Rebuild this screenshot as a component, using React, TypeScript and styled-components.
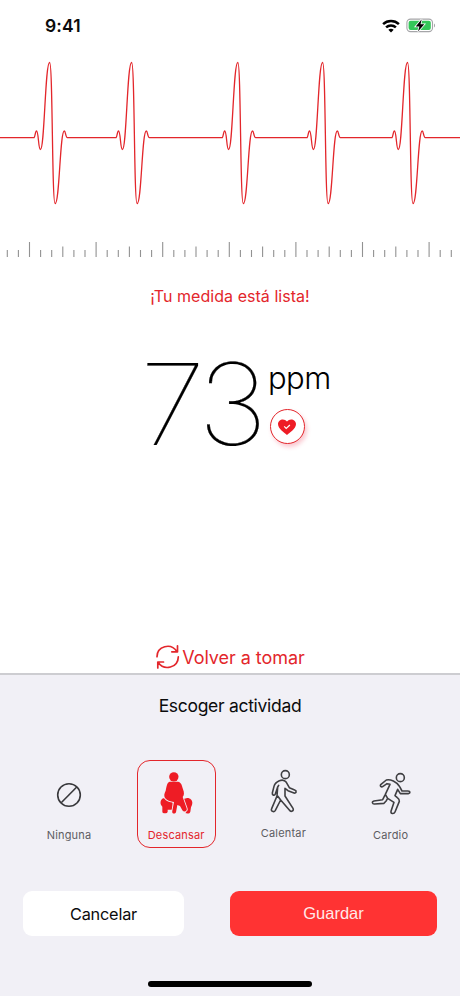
import React from "react";
import styled, { createGlobalStyle } from "styled-components";

const RED = "#e3262b";

const GlobalStyle = createGlobalStyle`
  html, body { margin: 0; padding: 0; background: #fff; }
  * { box-sizing: border-box; }
  svg { display: block; flex: none; }
`;

const Screen = styled.main`
  width: 460px;
  height: 996px;
  display: flex;
  flex-direction: column;
  background: #fff;
  color: #0b0b0c;
  font-family: Inter, "Liberation Sans", sans-serif;
  overflow: hidden;
`;

const StatusBar = styled.header`
  height: 51px;
  flex: none;
  display: flex;
  align-items: center;
  justify-content: space-between;
  padding: 0 24px 0 45px;
`;

const Time = styled.span`
  font-size: 17.5px;
  font-weight: 600;
  line-height: 20px;
  letter-spacing: 0.1px;
`;

const StatusIcons = styled.div`
  display: flex;
  align-items: center;
  gap: 6px;
`;

const Trace = styled.div`
  height: 189px;
  flex: none;
  padding-top: 1px;
`;

const Ruler = styled.div`
  height: 17px;
  flex: none;
`;

const Message = styled.p`
  margin: 29px 0 0;
  height: 20px;
  line-height: 20px;
  font-size: 16px;
  letter-spacing: 0.04px;
  text-align: center;
  color: ${RED};
`;

const Reading = styled.section`
  display: flex;
  height: 110px;
  margin: 43px 0 0 140px;
`;

const Value = styled.span`
  width: 128px;
  font-size: 113px;
  line-height: 111px;
  font-weight: 100;
  letter-spacing: -5.5px;
  color: #000;
  -webkit-text-stroke: 0.2px #000;
  transform: scaleX(1.06);
  transform-origin: left center;
`;

const Unit = styled.div`
  display: flex;
  flex-direction: column;
  padding-top: 10px;
`;

const UnitName = styled.span`
  font-size: 31px;
  line-height: 38px;
  font-weight: 300;
  letter-spacing: -0.6px;
  color: #000;
`;

const HeartBadge = styled.div`
  width: 35px;
  height: 35px;
  margin: 12px 0 0 1.5px;
  display: flex;
  align-items: center;
  justify-content: center;
  border: 1.3px solid ${RED};
  border-radius: 50%;
  background: #fff;
  box-shadow: 2px 3px 4px rgba(238, 60, 90, 0.28);
`;

const Retake = styled.button`
  margin: auto 0 3px;
  padding: 0;
  border: 0;
  background: none;
  display: flex;
  align-items: center;
  justify-content: center;
  gap: 2px;
  height: 26px;
  font-family: inherit;
  font-size: 18px;
  letter-spacing: -0.04px;
  color: ${RED};
`;

const Sheet = styled.section`
  height: 323px;
  flex: none;
  display: flex;
  flex-direction: column;
  background: #f1f0f6;
  border-top: 2px solid #cdcdd1;
`;

const SheetTitle = styled.h2`
  margin: 20px 0 0;
  font-size: 17.5px;
  line-height: 22px;
  font-weight: 400;
  letter-spacing: -0.3px;
  text-align: center;
`;

const Activities = styled.div`
  display: grid;
  grid-template-columns: 79px 79px 79px 79px;
  column-gap: 28.2px;
  margin: 43px 0 0 29.5px;
  height: 88px;
`;

const Activity = styled.button<{ $active?: boolean; $raise?: number }>`
  padding: 0 0 ${(p) => 5 + (p.$raise ?? 0)}px;
  border: 1.3px solid ${(p) => (p.$active ? RED : "transparent")};
  border-radius: 13px;
  background: none;
  display: flex;
  flex-direction: column;
  align-items: center;
  justify-content: flex-end;
  font-family: inherit;
  font-size: 11px;
  line-height: 14px;
  letter-spacing: 0.18px;
  color: ${(p) => (p.$active ? RED : "#5d5d62")};
`;

const IconSlot = styled.span<{ $gap: number }>`
  margin-bottom: ${(p) => p.$gap}px;
`;

const Actions = styled.div`
  display: grid;
  grid-template-columns: 161px 207px;
  column-gap: 46px;
  margin: 43px 0 0 23px;
`;

const Action = styled.button<{ $primary?: boolean }>`
  height: 45px;
  padding: 0;
  border: 0;
  border-radius: 9px;
  background: ${(p) => (p.$primary ? "#ff3333" : "#fff")};
  color: ${(p) => (p.$primary ? "#ffe9e9" : "#0b0b0c")};
  font-family: ${(p) => (p.$primary ? '"Liberation Sans", sans-serif' : "inherit")};
  font-size: ${(p) => (p.$primary ? 16.5 : 16.3)}px;
  letter-spacing: ${(p) => (p.$primary ? 0 : -0.2)}px;
`;

const HomeIndicator = styled.div`
  width: 164px;
  height: 6px;
  margin: auto auto 9px;
  border-radius: 3px;
  background: #000;
`;

const peaks = [49.3, 131.3, 237.5, 322.3, 407.2];

function Pulse() {
  const beat = (x: number) =>
    `L${x - 15.5} 85.6 C${x - 14.5} 85 ${x - 14.3} 79 ${x - 13.1} 79 C${x - 11} 79 ${x - 11.3} 97.5 ${x - 9.2} 97.5 ` +
    `C${x - 5} 97.5 ${x - 4.5} 10.5 ${x} 10.5 C${x + 3.2} 10.5 ${x + 2.3} 151.5 ${x + 5.5} 151.5 ` +
    `C${x + 10} 151.5 ${x + 10.3} 79 ${x + 14.7} 79 C${x + 16} 79 ${x + 16} 85.6 ${x + 17.7} 85.6`;
  return (
    <svg width="460" height="188" viewBox="0 0 460 188" fill="none">
      <path d={`M0 85.6 ${peaks.map((x) => beat(x + 0.3)).join(" ")} L460 85.6`} stroke={RED} strokeWidth="1.3" strokeLinejoin="round" />
    </svg>
  );
}

function Scale() {
  const ticks = Array.from({ length: 41 }, (_, i) => {
    const height = i % 6 === 2 ? 15 : i % 6 === 5 ? 10.5 : 7;
    return `M${(7.3 + i * 11.1).toFixed(1)} 17v-${height}`;
  }).join("");
  return (
    <svg width="460" height="17" viewBox="0 0 460 17">
      <path d={ticks} stroke="#929292" strokeWidth="1.1" />
    </svg>
  );
}

function Wifi() {
  return (
    <svg width="18" height="14" viewBox="0 0 18 14" fill="none" stroke="#000" strokeWidth="2.5">
      <path d="M1.1 5.2a11.5 11.5 0 0 1 15.8 0" />
      <path d="M4.1 8.4a7.2 7.2 0 0 1 9.8 0" />
      <path d="M6.3 10.8a4.2 4.2 0 0 1 5.4 0L9 13.4z" fill="#000" stroke="none" />
    </svg>
  );
}

function Battery() {
  return (
    <svg width="30" height="15" viewBox="0 0 30 15">
      <rect x="0.9" y="1.1" width="25.6" height="12.5" rx="3.6" fill="none" stroke="#a5a5a8" strokeWidth="1.1" />
      <rect x="2.6" y="2.8" width="22.2" height="9.1" rx="2" fill="#34c759" />
      <path d="M28 5.4v4c1.4-.5 1.4-3.5 0-4z" fill="#a5a5a8" />
      <path d="m15.7 1.3-6 7.1h3.7l-1.4 5.1 6.3-7.2h-3.8z" fill="#000" stroke="#fff" strokeWidth="1.6" paintOrder="stroke" />
    </svg>
  );
}

function Heart() {
  return (
    <svg width="20" height="18" viewBox="0 0 20 18">
      <path d="M10 17C7.5 14.9 1 11 1 6.1 1 1.3 7.2-.3 10 3.5 12.8-.3 19 1.3 19 6.1 19 11 12.5 14.9 10 17Z" fill="#ee1c25" />
      <path d="m7.2 8.4 2 2 3.7-3.4" fill="none" stroke="#fff" strokeWidth="1.2" />
    </svg>
  );
}

function Refresh() {
  return (
    <svg width="25" height="26" viewBox="0 0 25 26" fill="none" stroke={RED} strokeWidth="1.7" strokeLinecap="round" strokeLinejoin="round">
      <path d="M2 12.7C2.1 2.3 15.7-1.8 22 7.7M22.5 1.8v6h-5.7" />
      <path d="M23.3 12.9C23 23.5 9.4 27.5 3 18.2M8.5 18H2.8v6" />
    </svg>
  );
}

function NoneIcon() {
  return (
    <svg width="26" height="26" viewBox="0 0 26 26" fill="none" stroke="#38383b" strokeWidth="1.6">
      <circle cx="13" cy="13" r="11.3" />
      <path d="m5.2 20.8 15.8-16" />
    </svg>
  );
}

function RestIcon() {
  return (
    <svg width="34" height="44" viewBox="88 62 102 132" fill="#ee1c25">
      <path d="M101 144H121L129 158V178H114V184Q113 189 108 189H104Q98 189 98 184V169C90 162 91 147 101 144ZM165 145C177 139 188 147 188 157 188 164 185 167 184 171L182 184C181 189 176 190 168 189L171 172 160 145Z" />
      <path d="M120 94H145C155 96 157 105 160 117 164 127 164 135 159 140L171 174C174 183 163 187 158 180L151 167 143 164 139 186C136 193 125 190 128 181L133 155C122 154 111 150 106 143 102 136 104 129 108 121 111 109 111 97 120 94Z" stroke="#f1f0f6" strokeWidth="5" paintOrder="stroke" strokeLinejoin="round" />
      <circle cx="132.5" cy="79.5" r="14" />
    </svg>
  );
}

function WalkIcon() {
  return (
    <svg width="30" height="45" viewBox="55 58 90 135" fill="none" stroke="#3f3f42" strokeWidth="4.8" strokeLinejoin="round" strokeLinecap="round">
      <circle cx="107" cy="75" r="12" />
      <path d="M89 93C80 97 75 102 73 110L68 130C67 137 75 139 77 133L84 112 82 139 66 177C62 185 73 189 77 182L93 151 119 181C124 189 134 183 130 176L106 139 106 116 115 123 133 130C140 132 142 123 135 121L119 114 110 98C105 91 97 90 89 93ZM84 139 93 151M84 112 87 107" />
    </svg>
  );
}

function RunIcon() {
  return (
    <svg width="40" height="44" viewBox="362 64 120 132" fill="none" stroke="#3f3f42" strokeWidth="4.8" strokeLinejoin="round" strokeLinecap="round">
      <circle cx="450" cy="81" r="12" />
      <path d="M408 88 392 101C387 106 393 111 398 107L410 99 419 101 405 131 397 147 371 151C363 153 366 161 373 160L401 158 408 150 412 143 431 155 422 182C421 190 431 191 434 184L447 152C448 147 445 144 441 141L434 135 442 116 450 129 474 129C481 128 480 121 473 121L455 121 448 108C444 100 437 95 429 91 420 87 414 86 408 88ZM405 131 412 143" />
    </svg>
  );
}

export default function App() {
  return (
    <>
      <GlobalStyle />
      <Screen>
        <StatusBar>
          <Time>9:41</Time>
          <StatusIcons><Wifi /><Battery /></StatusIcons>
        </StatusBar>
        <Trace><Pulse /></Trace>
        <Ruler><Scale /></Ruler>
        <Message>¡Tu medida está lista!</Message>
        <Reading>
          <Value>73</Value>
          <Unit>
            <UnitName>ppm</UnitName>
            <HeartBadge><Heart /></HeartBadge>
          </Unit>
        </Reading>
        <Retake><Refresh />Volver a tomar</Retake>
        <Sheet>
          <SheetTitle>Escoger actividad</SheetTitle>
          <Activities>
            <Activity><IconSlot $gap={20}><NoneIcon /></IconSlot>Ninguna</Activity>
            <Activity $active><IconSlot $gap={13}><RestIcon /></IconSlot>Descansar</Activity>
            <Activity $raise={2}><IconSlot $gap={12}><WalkIcon /></IconSlot>Calentar</Activity>
            <Activity><IconSlot $gap={12}><RunIcon /></IconSlot>Cardio</Activity>
          </Activities>
          <Actions>
            <Action>Cancelar</Action>
            <Action $primary>Guardar</Action>
          </Actions>
          <HomeIndicator />
        </Sheet>
      </Screen>
    </>
  );
}
